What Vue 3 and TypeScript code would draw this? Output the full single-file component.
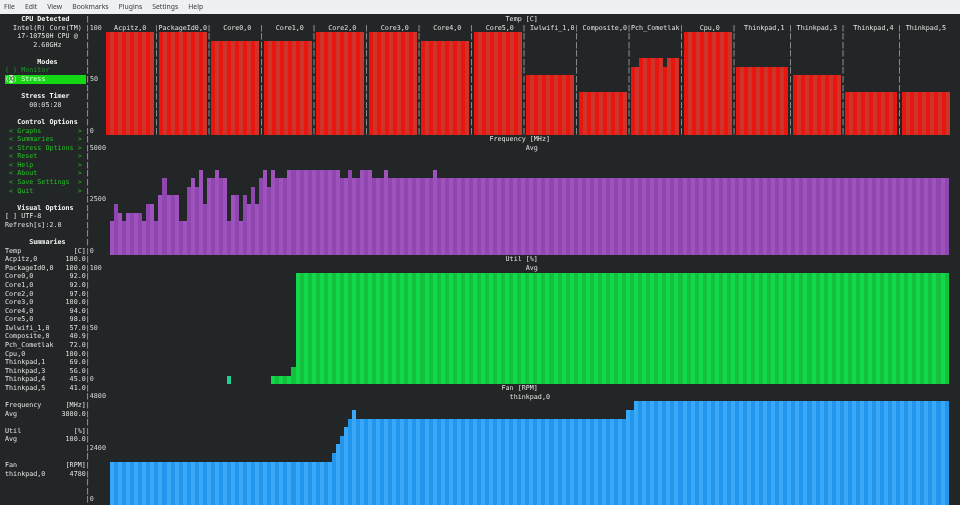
<script setup lang="ts">
const COL = 4.04
const ROW = 8.59

type Kind = 'text' | 'head' | 'menu' | 'dim' | 'sel'
interface SideRow { text: string; kind: Kind; axis: string }

const menuItems = ['File', 'Edit', 'View', 'Bookmarks', 'Plugins', 'Settings', 'Help']

const kv = (name: string, value: string) => ' ' + name + value.padStart(20 - name.length)
const opt = (name: string) => '  < ' + name.padEnd(14) + ' >'

const left: [string, Kind][] = [
  ['     CPU Detected', 'head'],
  ['   Intel(R) Core(TM)', 'text'],
  ['    i7-10750H CPU @', 'text'],
  ['        2.60GHz', 'text'],
  ['', 'text'],
  ['         Modes', 'head'],
  [' ( ) Monitor', 'dim'],
  ['', 'sel'],
  ['', 'text'],
  ['     Stress Timer', 'head'],
  ['       00:05:28', 'text'],
  ['', 'text'],
  ['    Control Options', 'head'],
  [opt('Graphs'), 'menu'],
  [opt('Summaries'), 'menu'],
  [opt('Stress Options'), 'menu'],
  [opt('Reset'), 'menu'],
  [opt('Help'), 'menu'],
  [opt('About'), 'menu'],
  [opt('Save Settings'), 'menu'],
  [opt('Quit'), 'menu'],
  ['', 'text'],
  ['    Visual Options', 'head'],
  [' [ ] UTF-8', 'text'],
  [' Refresh[s]:2.0', 'text'],
  ['', 'text'],
  ['       Summaries', 'head'],
  [kv('Temp', '[C]'), 'text'],
  [kv('Acpitz,0', '100.0'), 'text'],
  [kv('PackageId0,0', '100.0'), 'text'],
  [kv('Core0,0', '92.0'), 'text'],
  [kv('Core1,0', '92.0'), 'text'],
  [kv('Core2,0', '97.0'), 'text'],
  [kv('Core3,0', '100.0'), 'text'],
  [kv('Core4,0', '94.0'), 'text'],
  [kv('Core5,0', '98.0'), 'text'],
  [kv('Iwlwifi_1,0', '57.0'), 'text'],
  [kv('Composite,0', '40.9'), 'text'],
  [kv('Pch_Cometlak', '72.0'), 'text'],
  [kv('Cpu,0', '100.0'), 'text'],
  [kv('Thinkpad,1', '69.0'), 'text'],
  [kv('Thinkpad,3', '56.0'), 'text'],
  [kv('Thinkpad,4', '45.0'), 'text'],
  [kv('Thinkpad,5', '41.0'), 'text'],
  ['', 'text'],
  [kv('Frequency', '[MHz]'), 'text'],
  [kv('Avg', '3800.0'), 'text'],
  ['', 'text'],
  [kv('Util', '[%]'), 'text'],
  [kv('Avg', '100.0'), 'text'],
  ['', 'text'],
  ['', 'text'],
  [kv('Fan', '[RPM]'), 'text'],
  [kv('thinkpad,0', '4780'), 'text'],
  ['', 'text'],
  ['', 'text'],
  ['', 'text'],
]

const axisLabels: Record<number, string> = {
  1: '100', 7: '50', 13: '0',
  15: '5000', 21: '2500', 27: '0',
  29: '100', 36: '50', 42: '0',
  44: '4800', 50: '2400', 56: '0',
}

const sideRows: SideRow[] = left.map(([text, kind], i) => ({
  text: text.padEnd(21),
  kind,
  axis: axisLabels[i] ?? '',
}))

const selIndent = ' '
const selOpen = '('
const selCursor = 'X'
const selRest = ') Stress' + ' '.repeat(10)

const fill = (h: number, n: number): number[] => Array<number>(n).fill(h)

interface TempCell { label: string; cols: number[] }
const tempCell = (name: string, h: number, width = 12): TempCell => ({
  label: ' '.repeat(Math.ceil((width - name.length) / 2)) + name,
  cols: fill(h, width),
})

const tempCells: TempCell[] = [
  tempCell('Acpitz,0', 12),
  tempCell('PackageId0,0', 12),
  tempCell('Core0,0', 11),
  tempCell('Core1,0', 11),
  tempCell('Core2,0', 12),
  tempCell('Core3,0', 12),
  tempCell('Core4,0', 11),
  tempCell('Core5,0', 12),
  tempCell('Iwlwifi_1,0', 7),
  tempCell('Composite,0', 5),
  { label: 'Pch_Cometlak', cols: [8, 8, 9, 9, 9, 9, 9, 9, 8, 9, 9, 9] },
  tempCell('Cpu,0', 12),
  tempCell('Thinkpad,1', 8, 13),
  tempCell('Thinkpad,3', 7),
  tempCell('Thinkpad,4', 5, 13),
  tempCell('Thinkpad,5', 5),
]

const freq: number[] = [
  4, 6, 5, 4, ...fill(5, 4), 4, 6, 6, 4, 7, 9, 7, 7, 7, 4, 4, 8, 9, 8, 10, 6, 9, 9, 10, 9, 9,
  4, 7, 7, 4, 7, 6, 8, 6, 9, 10, 8, 10, 9, 9, 9, ...fill(10, 13),
  9, 9, 10, 9, 9, 10, 10, 10, 9, 9, 9, 10, ...fill(9, 11), 10, ...fill(9, 127),
]

const util: number[] = [
  ...fill(0, 29), 1, ...fill(0, 10), ...fill(1, 5), 2, ...fill(13, 162),
]

const fan: number[] = [
  ...fill(5, 55), 6, 7, 8, 9, 10, 11, ...fill(10, 67), 11, 11, ...fill(12, 78),
]

interface Plot { id: string; titles: string[]; cols: number[]; rows: number }
const plots: Plot[] = [
  { id: 'freq', titles: [' '.repeat(95) + 'Frequency [MHz]', ' '.repeat(104) + 'Avg'], cols: freq, rows: 12 },
  { id: 'util', titles: [' '.repeat(99) + 'Util [%]', ' '.repeat(104) + 'Avg'], cols: util, rows: 13 },
  { id: 'fan', titles: [' '.repeat(98) + 'Fan [RPM]', ' '.repeat(100) + 'thinkpad,0'], cols: fan, rows: 12 },
]

const tempTitle = ' '.repeat(99) + 'Temp [C]'
const sepLines = Array<string>(13).fill('|')

const barHeight = (h: number) => ({ height: h * ROW + 'px' })
const px = (n: number) => n * ROW + 'px'
const cellWidth = (n: number) => ({ width: n * COL + 'px' })
</script>

<template>
  <div class="window">
    <nav class="menubar">
      <span v-for="item in menuItems" :key="item" class="menu-item">{{ item }}</span>
    </nav>
    <main class="terminal">
      <aside class="side">
        <div v-for="(row, i) in sideRows" :key="i" class="line">
          <span v-if="row.kind === 'sel'">{{ selIndent }}<span class="sel">{{ selOpen }}<span class="cur">{{ selCursor }}</span>{{ selRest }}</span></span>
          <span v-else class="side-text" :class="row.kind">{{ row.text }}</span>
          <span class="axis">|{{ row.axis }}</span>
        </div>
      </aside>
      <section class="graphs">
        <div class="line">{{ tempTitle }}</div>
        <div class="temp">
          <template v-for="(cell, i) in tempCells" :key="cell.label">
            <div class="cell" :style="cellWidth(cell.cols.length)">
              <div class="line">{{ cell.label }}</div>
              <div class="bars twelve">
                <i v-for="(h, c) in cell.cols" :key="c" class="bar red" :style="barHeight(h)"></i>
              </div>
            </div>
            <div v-if="i < tempCells.length - 1" class="sep">
              <div v-for="(s, n) in sepLines" :key="n" class="line">{{ s }}</div>
            </div>
          </template>
        </div>
        <div v-for="plot in plots" :key="plot.id" class="plot">
          <div v-for="title in plot.titles" :key="title" class="line">{{ title }}</div>
          <div class="bars inset" :style="{ height: px(plot.rows) }">
            <i
              v-for="(h, c) in plot.cols"
              :key="c"
              class="bar"
              :class="[plot.id, { teal: plot.id === 'util' && c === 29 }]"
              :style="barHeight(h)"
            ></i>
          </div>
        </div>
      </section>
    </main>
  </div>
</template>

<style>
html, body { margin: 0; background: #232627; overflow: hidden; }
</style>

<style scoped>
.window {
  width: 960px;
  height: 505px;
  overflow: hidden;
  display: flex;
  flex-direction: column;
  background: #232627;
}
.menubar {
  flex: none;
  height: 14px;
  box-sizing: border-box;
  display: flex;
  align-items: center;
  gap: 10px;
  padding: 0 0 0 4px;
  background: #eff0f1;
  color: #3b4045;
  font: 6.85px/14px "Noto Sans", sans-serif;
  filter: blur(0.25px);
}
.terminal {
  flex: 1;
  min-height: 0;
  display: flex;
  padding: 1px 0 0 1px;
  color: #dfe2df;
  font-family: "DejaVu Sans Mono", monospace;
  font-size: 6.71px;
  text-rendering: geometricPrecision;
  filter: blur(0.3px);
}
.side { flex: none; width: 105.04px; }
.graphs { flex: none; width: 850px; }
.line {
  height: 8.59px;
  line-height: 8.59px;
  white-space: pre;
}
.head { font-weight: 700; color: #f4f6f4; }
.menu { color: #24c024; }
.dim { color: #1a9a2a; }
.sel { display: inline-block; width: 80.8px; overflow: hidden; vertical-align: top; background: #14d814; color: #f2faee; }
.cur { background: #c4e8bc; color: #235a23; }
.axis { color: #d8dbd8; }
.temp { display: flex; }
.cell { flex: none; }
.sep { flex: none; width: 4.04px; color: #c6c9c6; }
.bars {
  display: flex;
  align-items: flex-end;
}
.twelve { height: 103.08px; }
.inset { padding-left: 4.04px; }
.bar {
  display: block;
  flex: none;
  width: 4.04px;
}
.red { background: #e8160f; }
.red:nth-child(even) { background: #cd352a; }
.freq { background: #9e52bd; }
.freq:nth-child(even) { background: #8f46af; }
.util { background: #10d94a; }
.util:nth-child(even) { background: #14c03e; }
.fan { background: #3aa8f6; }
.fan:nth-child(even) { background: #2296ec; }
.util.teal { background: #1fd08f; }
</style>
